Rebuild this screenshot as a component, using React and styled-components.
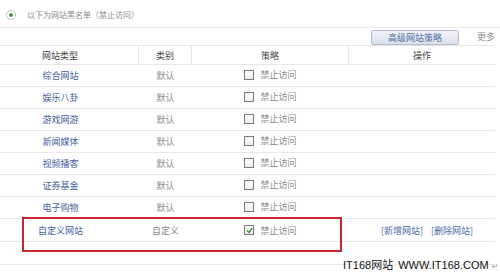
import React from 'react';
import styled, { createGlobalStyle } from 'styled-components';

const GlobalStyle = createGlobalStyle`
    html, body {
        margin: 0;
        padding: 0;
        background: #ffffff;
    }
    body {
        font-family: "Noto Sans CJK SC", "Noto Sans", sans-serif;
    }
`;

const Page = styled.div`
    position: relative;
    width: 500px;
    height: 276px;
    overflow: hidden;
    background: #ffffff;
`;

const TitleBar = styled.div`
    height: 28px;
    border-bottom: 1px solid #ececec;
    display: flex;
    align-items: center;
    padding: 2px 0 0 6px;
    box-sizing: border-box;
    gap: 11px;
`;

const RadioIcon = styled.span`
    width: 8px;
    height: 8px;
    border: 1px solid #b9c4b9;
    border-radius: 50%;
    display: inline-flex;
    align-items: center;
    justify-content: center;
    &:after {
        content: "";
        width: 4px;
        height: 4px;
        border-radius: 50%;
        background: #3c9a3c;
    }
`;

const Title = styled.span`
    font-size: 8px;
    color: #8a8a8a;
`;

const Toolbar = styled.div`
    height: 17px;
    display: flex;
    justify-content: flex-end;
    align-items: center;
    padding-right: 5px;
    gap: 18px;
`;

const ToolButton = styled.button`
    width: 88px;
    height: 15px;
    padding: 0;
    margin-top: 1px;
    border: 1px solid #b3bccb;
    border-radius: 2px;
    background: linear-gradient(#f1f4f9, #d9e0ea);
    color: #4d6ea6;
    font-family: inherit;
    font-size: 9px;
    line-height: 13px;
`;

const More = styled.span`
    font-size: 9px;
    color: #8c8c8c;
`;

const Table = styled.table`
    width: 495px;
    border-collapse: separate;
    border-spacing: 0;
    border-top: 1px solid #e6e6e6;
    table-layout: fixed;
`;

const Th = styled.th`
    height: 19px;
    padding: ${p => p.$pad || '0'};
    font-size: 9px;
    font-weight: normal;
    color: #444;
    text-align: center;
    border-bottom: 1px solid #e6e6e6;
    border-right: ${p => (p.$last ? 'none' : '1px solid #e6e6e6')};
    width: ${p => p.$w}px;
    box-sizing: border-box;
`;

const Td = styled.td`
    height: ${p => (p.$tall ? 22 : 21)}px;
    padding: ${p => p.$pad || '0'};
    font-size: 9px;
    text-align: center;
    color: #8a8a8a;
    border-bottom: 1px solid #e8e8e8;
`;

const SiteLink = styled.span`
    color: #3f60a0;
`;

const Policy = styled.span`
    display: inline-flex;
    align-items: center;
    gap: 6px;
    color: #8a8a8a;
`;

const Box = styled.span`
    width: 8px;
    height: 8px;
    border: 1px solid #7a7a7a;
    background: linear-gradient(#ffffff, #eeeeee);
    display: inline-flex;
    align-items: center;
    justify-content: center;
`;

const Actions = styled.span`
    display: inline-flex;
    gap: 8px;
    color: #4a6aa6;
`;

const Highlight = styled.div`
    position: absolute;
    left: 22px;
    top: 217px;
    width: 320px;
    height: 35px;
    border: 2px solid #c9262d;
    box-sizing: border-box;
    pointer-events: none;
`;

const Watermark = styled.div`
    position: absolute;
    left: 343px;
    top: 256px;
    font-family: "Liberation Sans", Arial, "Noto Sans CJK SC", sans-serif;
    font-size: 11px;
    color: #111;
    word-spacing: 2px;
`;

const ReturnMark = styled.span`
    position: absolute;
    left: 492px;
    top: 262px;
    font-size: 8px;
    color: #999;
    font-family: "DejaVu Sans", sans-serif;
`;

const Check = () => (
    <svg width="7" height="7" viewBox="0 0 7 7">
        <path d="M1 3.5 L3 5.5 L6.2 1.2" stroke="#2f8f2f" strokeWidth="1.4" fill="none" />
    </svg>
);

const rows = [
    { name: '综合网站', kind: '默认' },
    { name: '娱乐八卦', kind: '默认' },
    { name: '游戏网游', kind: '默认' },
    { name: '新闻媒体', kind: '默认' },
    { name: '视频播客', kind: '默认' },
    { name: '证券基金', kind: '默认' },
    { name: '电子购物', kind: '默认' },
];

const firstPad = '0 18px 0 0';
const lastPad = '0 0 0 10px';

export default function App() {
    return (
        <Page>
            <GlobalStyle />
            <TitleBar>
                <RadioIcon />
                <Title>以下为网站黑名单（禁止访问）</Title>
            </TitleBar>
            <Toolbar>
                <ToolButton>高级网站策略</ToolButton>
                <More>更多</More>
            </Toolbar>
            <Table>
                <thead>
                    <tr>
                        <Th $w={139} $pad={firstPad}>网站类型</Th>
                        <Th $w={53}>类别</Th>
                        <Th $w={157}>策略</Th>
                        <Th $w={146} $last>操作</Th>
                    </tr>
                </thead>
                <tbody>
                    {rows.map(r => (
                        <tr key={r.name}>
                            <Td $pad={firstPad}><SiteLink>{r.name}</SiteLink></Td>
                            <Td>{r.kind}</Td>
                            <Td><Policy><Box />禁止访问</Policy></Td>
                            <Td />
                        </tr>
                    ))}
                    <tr>
                        <Td $tall $pad={firstPad}><SiteLink>自定义网站</SiteLink></Td>
                        <Td $tall>自定义</Td>
                        <Td $tall><Policy><Box><Check /></Box>禁止访问</Policy></Td>
                        <Td $tall $pad={lastPad}>
                            <Actions><span>[新增网站]</span><span>[删除网站]</span></Actions>
                        </Td>
                    </tr>
                    <tr>
                        <Td $tall />
                        <Td $tall />
                        <Td $tall />
                        <Td $tall />
                    </tr>
                </tbody>
            </Table>
            <Highlight />
            <Watermark>IT168网站 WWW.IT168.COM</Watermark>
            <ReturnMark>↵</ReturnMark>
        </Page>
    );
}
